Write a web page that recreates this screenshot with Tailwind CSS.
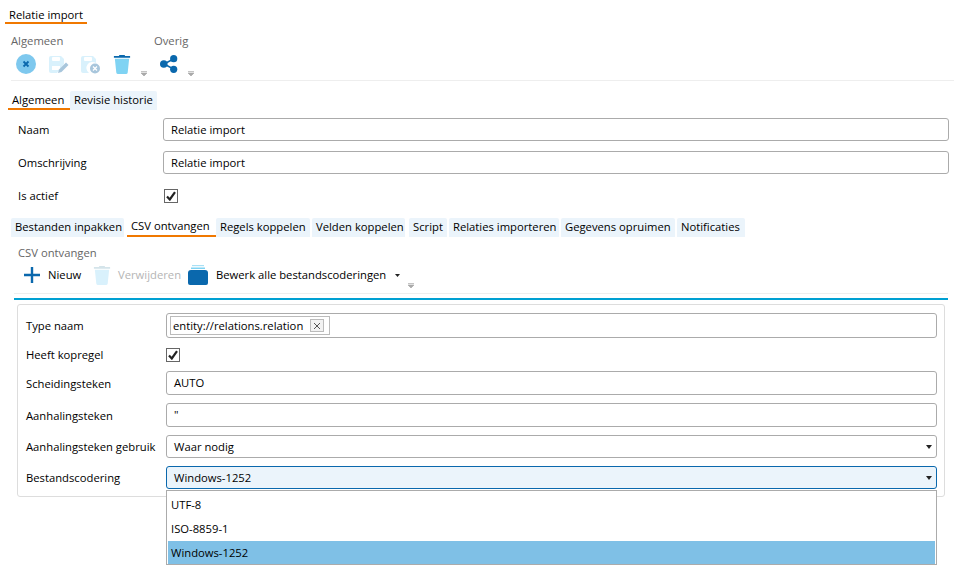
<!DOCTYPE html>
<html><head><meta charset="utf-8"><script src="https://cdn.jsdelivr.net/npm/@tailwindcss/browser@4"></script></head>
<body class="bg-white">
<div class="w-[954px] h-[566px] overflow-hidden relative bg-white text-[11.25px] leading-[16px] whitespace-nowrap text-black font-['Open_Sans','Noto_Sans',sans-serif]">
  <div class="pl-[5px] pt-[7px] h-[25px]"><div class="w-[82px] h-[17px] pl-[4px] border-b-2 border-[#f07800]">Relatie import</div></div>
  <div class="pl-[11px] pt-[8px] h-[55px] flex">
    <div class="w-[143px] relative">
      <div class="text-[#666]">Algemeen</div>
      <div class="flex items-center pl-[5px] pt-[5px] gap-[12px]">
        <svg width="20" height="20" viewBox="0 0 20 20"><circle cx="10" cy="10" r="10" fill="#7ec8ee"/><path d="M7.500 7.500l5 5M12.500 7.500l-5 5" stroke="#0a68ad" stroke-width="1.800"/></svg>
        <svg width="21" height="20" viewBox="0 0 21 20"><path d="M1 4a2 2 0 0 1 2-2h10l3 3v5l-7 9H3a2 2 0 0 1-2-2z" fill="#d9f1fc"/><rect x="4" y="3" width="8" height="4" rx="1" fill="#fff"/><rect x="4" y="12" width="8" height="4" fill="#fff"/><path d="M10 19l1-3.500 7-7 2.500 2.500-7 7z" fill="#a8c6dc"/></svg>
        <svg width="21" height="20" viewBox="0 0 21 20" class="-ml-[1px]"><path d="M1 4a2 2 0 0 1 2-2h10l3 3v4a6 6 0 0 0-7 10H3a2 2 0 0 1-2-2z" fill="#d9f1fc"/><rect x="4" y="3" width="8" height="4" rx="1" fill="#fff"/><circle cx="15" cy="14.500" r="5" fill="#a8c6dc"/><path d="M13 12.500l4 4M17 12.500l-4 4" stroke="#fff" stroke-width="1.300"/></svg>
        <svg width="18" height="20" viewBox="0 0 18 21"><path d="M6 1h6v1h5.500v2H.5V2H6z" fill="#0a68ad"/><path d="M1.500 5h15l-1.500 14.500a1.500 1.500 0 0 1-1.500 1.500h-9A1.500 1.500 0 0 1 3 19.500z" fill="#7fd3f3"/></svg>
      </div>
      <svg class="absolute left-[130px] top-[38px]" width="6" height="6" viewBox="0 0 6 6"><path d="M0 .5h6M0 2h6L3 5z" stroke="#aaa" stroke-width=".7" fill="#aaa"/></svg>
    </div>
    <div class="w-[45px] relative">
      <div class="text-[#666]">Overig</div>
      <svg class="ml-[6px] mt-[6px]" width="18" height="18" viewBox="0 0 18 18"><path d="M13.500 4L4 9l9.500 5" stroke="#0a68ad" stroke-width="1.500" fill="none"/><circle cx="13.700" cy="3.700" r="3.600" fill="#0a68ad"/><circle cx="3.800" cy="9" r="3.800" fill="#0a68ad"/><circle cx="13.700" cy="14.300" r="3.600" fill="#0a68ad"/></svg>
      <svg class="absolute left-[34px] top-[38px]" width="6" height="6" viewBox="0 0 6 6"><path d="M0 .5h6M0 2h6L3 5z" stroke="#aaa" stroke-width=".7" fill="#aaa"/></svg>
    </div>
  </div>
  <div class="ml-[11px] h-px bg-[#eeeeee]"></div>
  <div class="pl-[8px] pt-[11px] flex h-[30px] items-start">
    <div class="h-[18px] w-[62px] pl-[4px] border-b-2 border-[#f07800]">Algemeen</div>
    <div class="h-[19px] -mt-[1px] pt-[1px] px-[4px] bg-[#ebf4fb] rounded-t-[2px]">Revisie historie</div>
  </div>
  <div class="pl-[18px] pr-[5px] flex flex-col">
    <div class="flex items-center h-[23px] mt-[7px]"><span class="w-[145px]">Naam</span><div class="flex-1 h-[23px] border border-[#ababab] rounded-[3px] px-[7px] flex items-center">Relatie import</div></div>
    <div class="flex items-center h-[23px] mt-[10px]"><span class="w-[145px]">Omschrijving</span><div class="flex-1 h-[23px] border border-[#ababab] rounded-[3px] px-[7px] flex items-center">Relatie import</div></div>
    <div class="flex items-center h-[14px] mt-[15px]"><span class="w-[146px]">Is actief</span><div class="w-[14px] h-[14px] border border-[#666] flex items-center justify-center"><svg width="10" height="10" viewBox="0 0 10 10"><path d="M1 5.500l2.800 3L9 1.200" stroke="#222" stroke-width="2.200" fill="none"/></svg></div></div>
  </div>
  <div class="pl-[11px] mt-[15px] flex h-[19px] gap-[2px]">
    <div class="w-[113px] pl-[4px] bg-[#ebf4fb] rounded-t-[2px] pt-[1px]">Bestanden inpakken</div>
    <div class="w-[89px] pl-[4px] border-b-2 border-[#f07800] ml-[1px]">CSV ontvangen</div>
    <div class="w-[94px] pl-[4px] bg-[#ebf4fb] rounded-t-[2px] pt-[1px] -ml-[2px]">Regels koppelen</div>
    <div class="w-[93px] pl-[4px] bg-[#ebf4fb] rounded-t-[2px] pt-[1px]">Velden koppelen</div>
    <div class="w-[38px] pl-[4px] bg-[#ebf4fb] rounded-t-[2px] pt-[1px] ml-[2px]">Script</div>
    <div class="w-[110px] pl-[4px] bg-[#ebf4fb] rounded-t-[2px] pt-[1px]">Relaties importeren</div>
    <div class="w-[114px] pl-[4px] bg-[#ebf4fb] rounded-t-[2px] pt-[1px]">Gegevens opruimen</div>
    <div class="w-[68px] pl-[4px] bg-[#ebf4fb] rounded-t-[2px] pt-[1px]">Notificaties</div>
  </div>
  <div class="ml-[14px] mr-[6px]">
    <div class="pl-[4px] pt-[8px] h-[24px] text-[#666]">CSV ontvangen</div>
    <div class="h-[33px] pl-[10px] pb-[4px] flex items-center relative border-b border-[#eeeeee]">
      <svg width="16" height="16" viewBox="0 0 16 16"><path d="M8 0v16M0 8h16" stroke="#0a68ad" stroke-width="2.400"/></svg>
      <span class="ml-[8px] w-[34px]">Nieuw</span>
      <svg class="ml-[11px]" width="18" height="20" viewBox="0 0 18 21"><path d="M6 1h6v1h5.500v2H.5V2H6z" fill="#d4e4ea"/><path d="M1.500 5h15l-1.500 14.500a1.500 1.500 0 0 1-1.500 1.500h-9A1.500 1.500 0 0 1 3 19.500z" fill="#d9f1fc"/></svg>
      <span class="ml-[7px] w-[60px] text-[#b5b5b5]">Verwijderen</span>
      <svg class="ml-[10px]" width="20" height="20" viewBox="0 0 20 20"><path d="M4 0h12v1.200H4z" fill="#a8e0f5"/><path d="M3 2.500h14v1.500H3z" fill="#7fd3f3"/><path d="M3 5h14a3 3 0 0 1 3 3v10a2 2 0 0 1-2 2H2a2 2 0 0 1-2-2V8a3 3 0 0 1 3-3z" fill="#0a68ad"/></svg>
      <span class="ml-[8px] w-[169px]">Bewerk alle bestandscoderingen</span>
      <svg class="ml-[10px]" width="5" height="3" viewBox="0 0 5 3"><path d="M0 0h5L2.500 3z" fill="#222"/></svg>
      <svg class="absolute left-[394px] top-[22px]" width="6" height="6" viewBox="0 0 6 6"><path d="M0 .5h6M0 2h6L3 5z" stroke="#aaa" stroke-width=".7" fill="#aaa"/></svg>
    </div>
    <div class="mt-[4px] h-[2px] bg-[#00a0d2]"></div>
    <div class="relative ml-[3px] mr-[3px] mt-[4px] h-[193px] border border-[#dddddd] rounded-[3px] pl-[8px] pr-[7px] pt-[8px]">
      <div class="flex items-center h-[25px]"><span class="w-[140px]">Type naam</span><div class="flex-1 h-[25px] border border-[#ababab] rounded-[3px] pl-[3px] flex items-center"><div class="h-[19px] border border-[#bbbbbb] pl-[2px] pr-[5px] flex items-center"><span class="w-[131px]">entity://relations.relation</span><span class="ml-[6px] w-[14px] h-[13px] border border-[#bbbbbb] bg-[#f2f2f2] flex items-center justify-center"><svg width="8" height="8" viewBox="0 0 8 8"><path d="M1 1l6 6M7 1l-6 6" stroke="#555"/></svg></span></div></div></div>
      <div class="flex items-center h-[14px] mt-[10px]"><span class="w-[140px]">Heeft kopregel</span><div class="w-[14px] h-[14px] border border-[#666] flex items-center justify-center"><svg width="10" height="10" viewBox="0 0 10 10"><path d="M1 5.500l2.800 3L9 1.200" stroke="#222" stroke-width="2.200" fill="none"/></svg></div></div>
      <div class="flex items-center h-[24px] mt-[9px]"><span class="w-[140px] pt-[2px]">Scheidingsteken</span><div class="flex-1 h-[24px] border border-[#ababab] rounded-[3px] px-[7px] flex items-center">AUTO</div></div>
      <div class="flex items-center h-[24px] mt-[8px]"><span class="w-[140px] pt-[2px]">Aanhalingsteken</span><div class="flex-1 h-[24px] border border-[#ababab] rounded-[3px] px-[7px] flex items-center">"</div></div>
      <div class="flex items-center h-[23px] mt-[8px]"><span class="w-[140px]">Aanhalingsteken gebruik</span><div class="flex-1 h-[23px] border border-[#ababab] rounded-[3px] px-[7px] flex items-center justify-between">Waar nodig<svg class="-mr-[3px]" width="6" height="4" viewBox="0 0 6 4"><path d="M0 0h6L3 4z" fill="#222"/></svg></div></div>
      <div class="flex items-center h-[23px] mt-[8px]"><span class="w-[140px]">Bestandscodering</span><div class="flex-1 h-[23px] border border-[#0a68ad] bg-[#ebf4fb] rounded-[3px] px-[7px] flex items-center justify-between">Windows-1252<svg class="-mr-[3px]" width="6" height="4" viewBox="0 0 6 4"><path d="M0 0h6L3 4z" fill="#222"/></svg></div></div>
      <div class="absolute left-[148px] top-[185px] w-[771px] h-[75px] bg-white border border-[#ababab] p-[1px] pt-[2px]">
        <div class="h-[24px] pl-[3px] flex items-center">UTF-8</div>
        <div class="h-[24px] pl-[3px] flex items-center">ISO-8859-1</div>
        <div class="h-[23px] pl-[3px] flex items-center bg-[#7fc0e6]">Windows-1252</div>
      </div>
    </div>
  </div>
</div>
</body></html>
